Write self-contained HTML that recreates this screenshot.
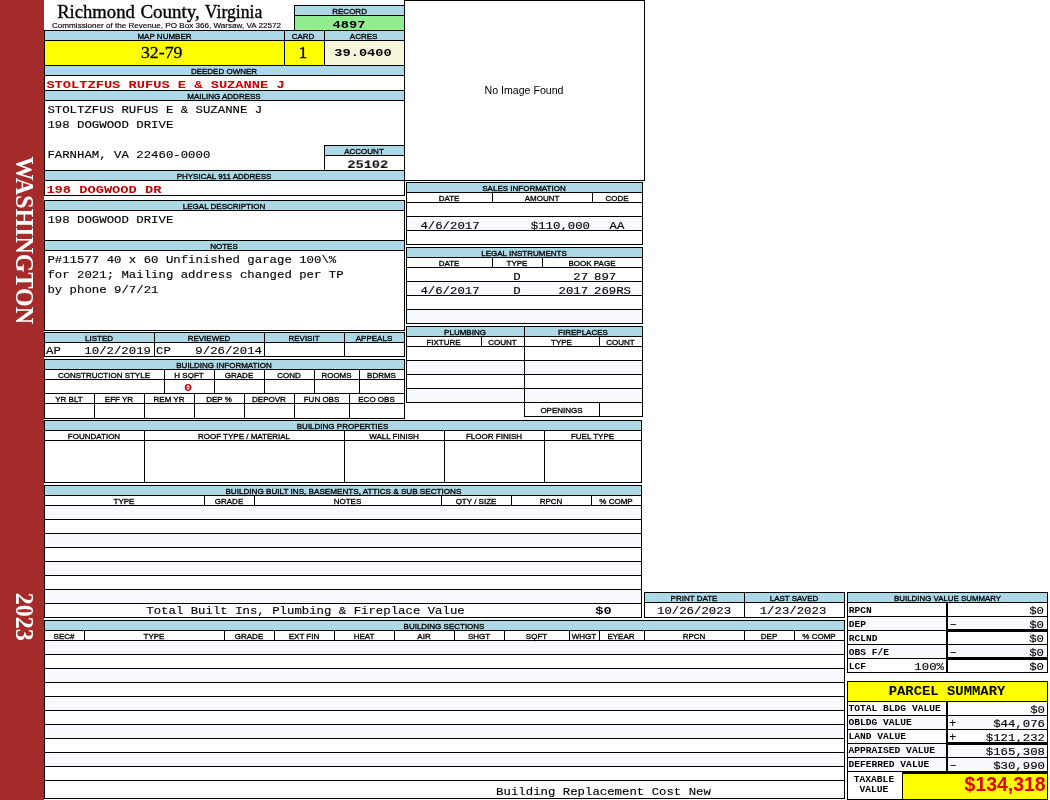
<!DOCTYPE html>
<html lang="en"><head><meta charset="utf-8"><title>Richmond County, Virginia - Property Record Card</title>
<style>
html,body{margin:0;padding:0;background:#fff}
body{width:1050px;height:800px;overflow:hidden}
svg{display:block;will-change:transform}
rect{shape-rendering:crispEdges}
text{font-family:"Liberation Sans",sans-serif;fill:#000}
.lab{font-size:8px;stroke:#000;stroke-width:.32px}
.sub{font-size:8.1px;stroke:#000;stroke-width:.15px}
.title{font-family:"Liberation Serif",serif;font-size:18.67px;stroke:#000;stroke-width:.35px}
.big{font-family:"Liberation Serif",serif;font-size:17.8px;stroke:#000;stroke-width:.3px}
.side{font-family:"Liberation Serif",serif;font-size:24px;font-weight:bold;fill:#fff}
.mono{font-family:"Liberation Mono",monospace;font-size:12.35px;stroke:#000;stroke-width:.15px}
.msign{font-family:"Liberation Mono",monospace;font-size:12.35px}
.mb{font-family:"Liberation Mono",monospace;font-size:13.7px;font-weight:bold}
.mb2{font-family:"Liberation Mono",monospace;font-size:13.7px;font-weight:bold}
.redb{font-family:"Liberation Mono",monospace;font-size:13.7px;font-weight:bold;fill:#c80000}
.redb2{font-family:"Liberation Mono",monospace;font-size:13.7px;font-weight:bold;fill:#c80000}
.slab{font-family:"Liberation Mono",monospace;font-size:9.6px;font-weight:bold}
.ptitle{font-family:"Liberation Mono",monospace;font-size:13.9px;font-weight:bold}
.noimg{font-size:11px}
.tax{font-size:19.4px;font-weight:bold;fill:#e00000}
</style></head>
<body>
<svg width="1050" height="800" viewBox="0 0 1050 800">
<rect x="0" y="0" width="44" height="800" fill="#a52a2a"/>
<text class="side" transform="translate(15.5,240.3) rotate(90) scale(1,1.06)" text-anchor="middle">WASHINGTON</text>
<text class="side" transform="translate(15.5,616.8) rotate(90) scale(1,1.06)" text-anchor="middle">2023</text>
<text x="57.2" y="18.1" class="title" text-anchor="start" textLength="77.6" lengthAdjust="spacingAndGlyphs">Richmond</text>
<text x="140.4" y="18.1" class="title" text-anchor="start" textLength="59.5" lengthAdjust="spacingAndGlyphs">County,</text>
<text x="204.8" y="18.1" class="title" text-anchor="start" textLength="57.6" lengthAdjust="spacingAndGlyphs">Virginia</text>
<text x="166.5" y="27.7" class="sub" text-anchor="middle">Commissioner of the Revenue, PO Box 366, Warsaw, VA 22572</text>
<rect x="294" y="5" width="111" height="1" fill="#000"/>
<rect x="294" y="30" width="111" height="1" fill="#000"/>
<rect x="294" y="5" width="1" height="26" fill="#000"/>
<rect x="404" y="5" width="1" height="26" fill="#000"/>
<rect x="295" y="6" width="109" height="9" fill="#add8e6"/>
<rect x="294" y="15" width="111" height="1" fill="#000"/>
<rect x="295" y="16" width="109" height="14" fill="#90ee90"/>
<text x="349.6" y="13.5" class="lab" text-anchor="middle">RECORD</text>
<text transform="translate(349 27.8) scale(1 0.85)" class="mb" text-anchor="middle">4897</text>
<rect x="45" y="31" width="359" height="9" fill="#add8e6"/>
<rect x="45" y="41" width="279" height="24" fill="#ffff00"/>
<rect x="325" y="41" width="79" height="24" fill="#f5f5dc"/>
<rect x="44" y="30" width="361" height="1" fill="#000"/>
<rect x="44" y="40" width="361" height="1" fill="#000"/>
<rect x="44" y="65" width="361" height="1" fill="#000"/>
<rect x="284" y="30" width="1" height="36" fill="#000"/>
<rect x="324" y="30" width="1" height="36" fill="#000"/>
<text x="164.5" y="38.5" class="lab" text-anchor="middle">MAP NUMBER</text>
<text x="303" y="38.5" class="lab" text-anchor="middle">CARD</text>
<text x="363.6" y="38.5" class="lab" text-anchor="middle">ACRES</text>
<text transform="translate(161.7 58) scale(1 0.9)" class="big" text-anchor="middle">32-79</text>
<text transform="translate(303 57.7) scale(1 0.9)" class="big" text-anchor="middle">1</text>
<text transform="translate(363 55.8) scale(1 0.85)" class="mb" text-anchor="middle">39.0400</text>
<rect x="45" y="66" width="359" height="9" fill="#add8e6"/>
<rect x="44" y="75" width="361" height="1" fill="#000"/>
<rect x="44" y="90" width="361" height="1" fill="#000"/>
<text x="224" y="73.5" class="lab" text-anchor="middle">DEEDED OWNER</text>
<text transform="translate(46.4 87.8) scale(1 0.85)" class="redb" text-anchor="start">STOLTZFUS RUFUS E &amp; SUZANNE J</text>
<rect x="45" y="91" width="359" height="9" fill="#add8e6"/>
<rect x="44" y="100" width="361" height="1" fill="#000"/>
<rect x="44" y="170" width="361" height="1" fill="#000"/>
<text x="224" y="98.5" class="lab" text-anchor="middle">MAILING ADDRESS</text>
<text transform="translate(47.4 112.8) scale(1 0.85)" class="mono" text-anchor="start">STOLTZFUS RUFUS E &amp; SUZANNE J</text>
<text transform="translate(47.4 127.77) scale(1 0.85)" class="mono" text-anchor="start">198 DOGWOOD DRIVE</text>
<text transform="translate(47.4 157.71) scale(1 0.85)" class="mono" text-anchor="start">FARNHAM, VA 22460-0000</text>
<rect x="324" y="145" width="81" height="1" fill="#000"/>
<rect x="324" y="170" width="81" height="1" fill="#000"/>
<rect x="324" y="145" width="1" height="26" fill="#000"/>
<rect x="404" y="145" width="1" height="26" fill="#000"/>
<rect x="325" y="146" width="79" height="9" fill="#add8e6"/>
<rect x="324" y="155" width="81" height="1" fill="#000"/>
<text x="364" y="153.5" class="lab" text-anchor="middle">ACCOUNT</text>
<text transform="translate(367.7 168) scale(1 0.85)" class="mb" text-anchor="middle">25102</text>
<rect x="45" y="171" width="359" height="9" fill="#add8e6"/>
<rect x="44" y="180" width="361" height="1" fill="#000"/>
<rect x="44" y="195" width="361" height="1" fill="#000"/>
<text x="224" y="178.5" class="lab" text-anchor="middle">PHYSICAL 911 ADDRESS</text>
<text transform="translate(46.4 192.8) scale(1 0.85)" class="redb" text-anchor="start">198 DOGWOOD DR</text>
<rect x="44" y="30" width="1" height="166" fill="#000"/>
<rect x="404" y="30" width="1" height="166" fill="#000"/>
<rect x="44" y="200" width="361" height="1" fill="#000"/>
<rect x="44" y="330" width="361" height="1" fill="#000"/>
<rect x="44" y="200" width="1" height="131" fill="#000"/>
<rect x="404" y="200" width="1" height="131" fill="#000"/>
<rect x="45" y="201" width="359" height="9" fill="#add8e6"/>
<rect x="44" y="210" width="361" height="1" fill="#000"/>
<rect x="44" y="240" width="361" height="1" fill="#000"/>
<rect x="45" y="241" width="359" height="9" fill="#add8e6"/>
<rect x="44" y="250" width="361" height="1" fill="#000"/>
<text x="224" y="208.5" class="lab" text-anchor="middle">LEGAL DESCRIPTION</text>
<text x="224" y="248.5" class="lab" text-anchor="middle">NOTES</text>
<text transform="translate(47.4 223) scale(1 0.85)" class="mono" text-anchor="start">198 DOGWOOD DRIVE</text>
<text transform="translate(47.4 263) scale(1 0.85)" class="mono" text-anchor="start">P#11577 40 x 60 Unfinished garage 100\%</text>
<text transform="translate(47.4 278) scale(1 0.85)" class="mono" text-anchor="start">for 2021; Mailing address changed per TP</text>
<text transform="translate(47.4 293) scale(1 0.85)" class="mono" text-anchor="start">by phone 9/7/21</text>
<rect x="44" y="332" width="361" height="1" fill="#000"/>
<rect x="44" y="356" width="361" height="1" fill="#000"/>
<rect x="44" y="332" width="1" height="25" fill="#000"/>
<rect x="404" y="332" width="1" height="25" fill="#000"/>
<rect x="45" y="333" width="359" height="9" fill="#add8e6"/>
<rect x="44" y="342" width="361" height="1" fill="#000"/>
<rect x="154" y="332" width="1" height="25" fill="#000"/>
<rect x="264" y="332" width="1" height="25" fill="#000"/>
<rect x="344" y="332" width="1" height="25" fill="#000"/>
<text x="99" y="340.5" class="lab" text-anchor="middle">LISTED</text>
<text x="209" y="340.5" class="lab" text-anchor="middle">REVIEWED</text>
<text x="304" y="340.5" class="lab" text-anchor="middle">REVISIT</text>
<text x="374" y="340.5" class="lab" text-anchor="middle">APPEALS</text>
<text transform="translate(46 354) scale(1 0.85)" class="mono" text-anchor="start">AP</text>
<text transform="translate(151 354) scale(1 0.85)" class="mono" text-anchor="end">10/2/2019</text>
<text transform="translate(156 354) scale(1 0.85)" class="mono" text-anchor="start">CP</text>
<text transform="translate(262 354) scale(1 0.85)" class="mono" text-anchor="end">9/26/2014</text>
<rect x="44" y="359" width="361" height="1" fill="#000"/>
<rect x="44" y="418" width="361" height="1" fill="#000"/>
<rect x="44" y="359" width="1" height="60" fill="#000"/>
<rect x="404" y="359" width="1" height="60" fill="#000"/>
<rect x="45" y="360" width="359" height="9" fill="#add8e6"/>
<rect x="44" y="369" width="361" height="1" fill="#000"/>
<rect x="44" y="379" width="361" height="1" fill="#000"/>
<rect x="44" y="393" width="361" height="1" fill="#000"/>
<rect x="44" y="403" width="361" height="1" fill="#000"/>
<rect x="164" y="369" width="1" height="25" fill="#000"/>
<rect x="214" y="369" width="1" height="25" fill="#000"/>
<rect x="264" y="369" width="1" height="25" fill="#000"/>
<rect x="314" y="369" width="1" height="25" fill="#000"/>
<rect x="359" y="369" width="1" height="25" fill="#000"/>
<rect x="94" y="393" width="1" height="26" fill="#000"/>
<rect x="144" y="393" width="1" height="26" fill="#000"/>
<rect x="194" y="393" width="1" height="26" fill="#000"/>
<rect x="244" y="393" width="1" height="26" fill="#000"/>
<rect x="294" y="393" width="1" height="26" fill="#000"/>
<rect x="349" y="393" width="1" height="26" fill="#000"/>
<text x="224" y="367.5" class="lab" text-anchor="middle">BUILDING INFORMATION</text>
<text x="104" y="377.5" class="lab" text-anchor="middle">CONSTRUCTION STYLE</text>
<text x="189" y="377.5" class="lab" text-anchor="middle">H SQFT</text>
<text x="239" y="377.5" class="lab" text-anchor="middle">GRADE</text>
<text x="289" y="377.5" class="lab" text-anchor="middle">COND</text>
<text x="336.5" y="377.5" class="lab" text-anchor="middle">ROOMS</text>
<text x="381.5" y="377.5" class="lab" text-anchor="middle">BDRMS</text>
<text x="69" y="401.5" class="lab" text-anchor="middle">YR BLT</text>
<text x="119" y="401.5" class="lab" text-anchor="middle">EFF YR</text>
<text x="169" y="401.5" class="lab" text-anchor="middle">REM YR</text>
<text x="219" y="401.5" class="lab" text-anchor="middle">DEP %</text>
<text x="269" y="401.5" class="lab" text-anchor="middle">DEPOVR</text>
<text x="321.5" y="401.5" class="lab" text-anchor="middle">FUN OBS</text>
<text x="376.5" y="401.5" class="lab" text-anchor="middle">ECO OBS</text>
<text transform="translate(188 390.5) scale(1 0.85)" class="redb2" text-anchor="middle">0</text>
<rect x="404" y="0" width="241" height="181" fill="#fff"/>
<rect x="404" y="0" width="241" height="1" fill="#000"/>
<rect x="404" y="180" width="241" height="1" fill="#000"/>
<rect x="404" y="0" width="1" height="181" fill="#000"/>
<rect x="644" y="0" width="1" height="181" fill="#000"/>
<text x="524" y="94" class="noimg" text-anchor="middle" textLength="79" lengthAdjust="spacingAndGlyphs">No Image Found</text>
<rect x="406" y="182" width="237" height="1" fill="#000"/>
<rect x="406" y="244" width="237" height="1" fill="#000"/>
<rect x="406" y="182" width="1" height="63" fill="#000"/>
<rect x="642" y="182" width="1" height="63" fill="#000"/>
<rect x="407" y="183" width="235" height="9" fill="#add8e6"/>
<rect x="407" y="217" width="235" height="13" fill="#f8f8ff"/>
<rect x="406" y="192" width="237" height="1" fill="#000"/>
<rect x="406" y="202" width="237" height="1" fill="#000"/>
<rect x="406" y="216" width="237" height="1" fill="#000"/>
<rect x="406" y="230" width="237" height="1" fill="#000"/>
<rect x="492" y="192" width="1" height="11" fill="#000"/>
<rect x="592" y="192" width="1" height="11" fill="#000"/>
<text x="524" y="190.5" class="lab" text-anchor="middle">SALES INFORMATION</text>
<text x="449" y="200.5" class="lab" text-anchor="middle">DATE</text>
<text x="542" y="200.5" class="lab" text-anchor="middle">AMOUNT</text>
<text x="617" y="200.5" class="lab" text-anchor="middle">CODE</text>
<text transform="translate(450 228.5) scale(1 0.85)" class="mono" text-anchor="middle">4/6/2017</text>
<text transform="translate(590 228.5) scale(1 0.85)" class="mono" text-anchor="end">$110,000</text>
<text transform="translate(617 228.5) scale(1 0.85)" class="mono" text-anchor="middle">AA</text>
<rect x="406" y="247" width="237" height="1" fill="#000"/>
<rect x="406" y="323" width="237" height="1" fill="#000"/>
<rect x="406" y="247" width="1" height="77" fill="#000"/>
<rect x="642" y="247" width="1" height="77" fill="#000"/>
<rect x="407" y="248" width="235" height="9" fill="#add8e6"/>
<rect x="407" y="282" width="235" height="13" fill="#f8f8ff"/>
<rect x="407" y="310" width="235" height="13" fill="#f8f8ff"/>
<rect x="406" y="257" width="237" height="1" fill="#000"/>
<rect x="406" y="267" width="237" height="1" fill="#000"/>
<rect x="406" y="281" width="237" height="1" fill="#000"/>
<rect x="406" y="295" width="237" height="1" fill="#000"/>
<rect x="406" y="309" width="237" height="1" fill="#000"/>
<rect x="492" y="257" width="1" height="11" fill="#000"/>
<rect x="542" y="257" width="1" height="11" fill="#000"/>
<text x="524" y="255.5" class="lab" text-anchor="middle">LEGAL INSTRUMENTS</text>
<text x="449" y="265.5" class="lab" text-anchor="middle">DATE</text>
<text x="517" y="265.5" class="lab" text-anchor="middle">TYPE</text>
<text x="592" y="265.5" class="lab" text-anchor="middle">BOOK PAGE</text>
<text transform="translate(517 279.5) scale(1 0.85)" class="mono" text-anchor="middle">D</text>
<text transform="translate(573.3 279.5) scale(1 0.85)" class="mono" text-anchor="start">27</text>
<text transform="translate(594 279.5) scale(1 0.85)" class="mono" text-anchor="start">897</text>
<text transform="translate(450 293.5) scale(1 0.85)" class="mono" text-anchor="middle">4/6/2017</text>
<text transform="translate(517 293.5) scale(1 0.85)" class="mono" text-anchor="middle">D</text>
<text transform="translate(558.5 293.5) scale(1 0.85)" class="mono" text-anchor="start">2017</text>
<text transform="translate(594 293.5) scale(1 0.85)" class="mono" text-anchor="start">269RS</text>
<rect x="406" y="326" width="119" height="1" fill="#000"/>
<rect x="406" y="402" width="119" height="1" fill="#000"/>
<rect x="406" y="326" width="1" height="77" fill="#000"/>
<rect x="524" y="326" width="1" height="77" fill="#000"/>
<rect x="524" y="326" width="119" height="1" fill="#000"/>
<rect x="524" y="416" width="119" height="1" fill="#000"/>
<rect x="524" y="326" width="1" height="91" fill="#000"/>
<rect x="642" y="326" width="1" height="91" fill="#000"/>
<rect x="407" y="327" width="117" height="9" fill="#add8e6"/>
<rect x="525" y="327" width="117" height="9" fill="#add8e6"/>
<rect x="407" y="361" width="235" height="13" fill="#f8f8ff"/>
<rect x="407" y="389" width="235" height="13" fill="#f8f8ff"/>
<rect x="524" y="326" width="1" height="91" fill="#000"/>
<rect x="406" y="336" width="237" height="1" fill="#000"/>
<rect x="406" y="346" width="237" height="1" fill="#000"/>
<rect x="406" y="360" width="237" height="1" fill="#000"/>
<rect x="406" y="374" width="237" height="1" fill="#000"/>
<rect x="406" y="388" width="237" height="1" fill="#000"/>
<rect x="406" y="402" width="237" height="1" fill="#000"/>
<rect x="481" y="336" width="1" height="11" fill="#000"/>
<rect x="599" y="336" width="1" height="11" fill="#000"/>
<rect x="599" y="402" width="1" height="15" fill="#000"/>
<text x="465" y="334.5" class="lab" text-anchor="middle">PLUMBING</text>
<text x="583" y="334.5" class="lab" text-anchor="middle">FIREPLACES</text>
<text x="443.5" y="344.5" class="lab" text-anchor="middle">FIXTURE</text>
<text x="502.5" y="344.5" class="lab" text-anchor="middle">COUNT</text>
<text x="561.5" y="344.5" class="lab" text-anchor="middle">TYPE</text>
<text x="620.5" y="344.5" class="lab" text-anchor="middle">COUNT</text>
<text x="561.5" y="412.5" class="lab" text-anchor="middle">OPENINGS</text>
<rect x="44" y="420" width="598" height="1" fill="#000"/>
<rect x="44" y="482" width="598" height="1" fill="#000"/>
<rect x="44" y="420" width="1" height="63" fill="#000"/>
<rect x="641" y="420" width="1" height="63" fill="#000"/>
<rect x="45" y="421" width="596" height="9" fill="#add8e6"/>
<rect x="44" y="430" width="598" height="1" fill="#000"/>
<rect x="44" y="440" width="598" height="1" fill="#000"/>
<rect x="144" y="430" width="1" height="53" fill="#000"/>
<rect x="344" y="430" width="1" height="53" fill="#000"/>
<rect x="444" y="430" width="1" height="53" fill="#000"/>
<rect x="544" y="430" width="1" height="53" fill="#000"/>
<text x="342.5" y="428.5" class="lab" text-anchor="middle">BUILDING PROPERTIES</text>
<text x="94" y="438.5" class="lab" text-anchor="middle">FOUNDATION</text>
<text x="244" y="438.5" class="lab" text-anchor="middle">ROOF TYPE / MATERIAL</text>
<text x="394" y="438.5" class="lab" text-anchor="middle">WALL FINISH</text>
<text x="494" y="438.5" class="lab" text-anchor="middle">FLOOR FINISH</text>
<text x="592.5" y="438.5" class="lab" text-anchor="middle">FUEL TYPE</text>
<rect x="44" y="485" width="598" height="1" fill="#000"/>
<rect x="44" y="617" width="598" height="1" fill="#000"/>
<rect x="44" y="485" width="1" height="133" fill="#000"/>
<rect x="641" y="485" width="1" height="133" fill="#000"/>
<rect x="45" y="486" width="596" height="9" fill="#add8e6"/>
<rect x="44" y="495" width="598" height="1" fill="#000"/>
<rect x="44" y="505" width="598" height="1" fill="#000"/>
<rect x="45" y="506" width="596" height="13" fill="#f8f8ff"/>
<rect x="44" y="519" width="598" height="1" fill="#000"/>
<rect x="44" y="533" width="598" height="1" fill="#000"/>
<rect x="45" y="534" width="596" height="13" fill="#f8f8ff"/>
<rect x="44" y="547" width="598" height="1" fill="#000"/>
<rect x="44" y="561" width="598" height="1" fill="#000"/>
<rect x="45" y="562" width="596" height="13" fill="#f8f8ff"/>
<rect x="44" y="575" width="598" height="1" fill="#000"/>
<rect x="44" y="589" width="598" height="1" fill="#000"/>
<rect x="45" y="590" width="596" height="13" fill="#f8f8ff"/>
<rect x="44" y="603" width="598" height="1" fill="#000"/>
<rect x="44" y="617" width="598" height="1" fill="#000"/>
<rect x="204" y="495" width="1" height="11" fill="#000"/>
<rect x="254" y="495" width="1" height="11" fill="#000"/>
<rect x="441" y="495" width="1" height="11" fill="#000"/>
<rect x="511" y="495" width="1" height="11" fill="#000"/>
<rect x="591" y="495" width="1" height="11" fill="#000"/>
<text x="343.4" y="493.5" class="lab" text-anchor="middle" textLength="236" lengthAdjust="spacingAndGlyphs">BUILDING BUILT INS, BASEMENTS, ATTICS &amp; SUB SECTIONS</text>
<text x="124" y="503.5" class="lab" text-anchor="middle">TYPE</text>
<text x="229" y="503.5" class="lab" text-anchor="middle">GRADE</text>
<text x="347.5" y="503.5" class="lab" text-anchor="middle">NOTES</text>
<text x="476" y="503.5" class="lab" text-anchor="middle">QTY / SIZE</text>
<text x="551" y="503.5" class="lab" text-anchor="middle">RPCN</text>
<text x="616" y="503.5" class="lab" text-anchor="middle">% COMP</text>
<text transform="translate(305.5 614.3) scale(1 0.85)" class="mono" text-anchor="middle">Total Built Ins, Plumbing &amp; Fireplace Value</text>
<text transform="translate(603.5 614.2) scale(1 0.85)" class="mb2" text-anchor="middle">$0</text>
<rect x="644" y="592" width="201" height="1" fill="#000"/>
<rect x="644" y="617" width="201" height="1" fill="#000"/>
<rect x="644" y="592" width="1" height="26" fill="#000"/>
<rect x="844" y="592" width="1" height="26" fill="#000"/>
<rect x="645" y="593" width="199" height="9" fill="#add8e6"/>
<rect x="644" y="602" width="201" height="1" fill="#000"/>
<rect x="744" y="592" width="1" height="26" fill="#000"/>
<text x="694" y="600.5" class="lab" text-anchor="middle">PRINT DATE</text>
<text x="794" y="600.5" class="lab" text-anchor="middle">LAST SAVED</text>
<text transform="translate(694 613.8) scale(1 0.85)" class="mono" text-anchor="middle">10/26/2023</text>
<text transform="translate(793 613.8) scale(1 0.85)" class="mono" text-anchor="middle">1/23/2023</text>
<rect x="44" y="620" width="801" height="1" fill="#000"/>
<rect x="44" y="798" width="801" height="1" fill="#000"/>
<rect x="44" y="620" width="1" height="179" fill="#000"/>
<rect x="844" y="620" width="1" height="179" fill="#000"/>
<rect x="45" y="621" width="799" height="9" fill="#add8e6"/>
<rect x="44" y="630" width="801" height="1" fill="#000"/>
<rect x="44" y="640" width="801" height="1" fill="#000"/>
<rect x="45" y="641" width="799" height="13" fill="#f8f8ff"/>
<rect x="44" y="654" width="801" height="1" fill="#000"/>
<rect x="44" y="668" width="801" height="1" fill="#000"/>
<rect x="45" y="669" width="799" height="13" fill="#f8f8ff"/>
<rect x="44" y="682" width="801" height="1" fill="#000"/>
<rect x="44" y="696" width="801" height="1" fill="#000"/>
<rect x="45" y="697" width="799" height="13" fill="#f8f8ff"/>
<rect x="44" y="710" width="801" height="1" fill="#000"/>
<rect x="44" y="724" width="801" height="1" fill="#000"/>
<rect x="45" y="725" width="799" height="13" fill="#f8f8ff"/>
<rect x="44" y="738" width="801" height="1" fill="#000"/>
<rect x="44" y="752" width="801" height="1" fill="#000"/>
<rect x="45" y="753" width="799" height="13" fill="#f8f8ff"/>
<rect x="44" y="766" width="801" height="1" fill="#000"/>
<rect x="44" y="780" width="801" height="1" fill="#000"/>
<rect x="84" y="630" width="1" height="11" fill="#000"/>
<rect x="224" y="630" width="1" height="11" fill="#000"/>
<rect x="274" y="630" width="1" height="11" fill="#000"/>
<rect x="334" y="630" width="1" height="11" fill="#000"/>
<rect x="394" y="630" width="1" height="11" fill="#000"/>
<rect x="454" y="630" width="1" height="11" fill="#000"/>
<rect x="504" y="630" width="1" height="11" fill="#000"/>
<rect x="569" y="630" width="1" height="11" fill="#000"/>
<rect x="599" y="630" width="1" height="11" fill="#000"/>
<rect x="644" y="630" width="1" height="11" fill="#000"/>
<rect x="744" y="630" width="1" height="11" fill="#000"/>
<rect x="794" y="630" width="1" height="11" fill="#000"/>
<text x="444" y="628.5" class="lab" text-anchor="middle">BUILDING SECTIONS</text>
<text x="64" y="638.5" class="lab" text-anchor="middle">SEC#</text>
<text x="154" y="638.5" class="lab" text-anchor="middle">TYPE</text>
<text x="249" y="638.5" class="lab" text-anchor="middle">GRADE</text>
<text x="304" y="638.5" class="lab" text-anchor="middle">EXT FIN</text>
<text x="364" y="638.5" class="lab" text-anchor="middle">HEAT</text>
<text x="424" y="638.5" class="lab" text-anchor="middle">AIR</text>
<text x="479" y="638.5" class="lab" text-anchor="middle">SHGT</text>
<text x="536.5" y="638.5" class="lab" text-anchor="middle">SQFT</text>
<text x="584" y="638.5" class="lab" text-anchor="middle">WHGT</text>
<text x="621" y="638.5" class="lab" text-anchor="middle">EYEAR</text>
<text x="694" y="638.5" class="lab" text-anchor="middle">RPCN</text>
<text x="769" y="638.5" class="lab" text-anchor="middle">DEP</text>
<text x="819" y="638.5" class="lab" text-anchor="middle">% COMP</text>
<text transform="translate(603.5 795) scale(1 0.85)" class="mono" text-anchor="middle">Building Replacement Cost New</text>
<rect x="847" y="592" width="201" height="1" fill="#000"/>
<rect x="847" y="672" width="201" height="1" fill="#000"/>
<rect x="847" y="592" width="1" height="81" fill="#000"/>
<rect x="1047" y="592" width="1" height="81" fill="#000"/>
<rect x="848" y="593" width="199" height="9" fill="#add8e6"/>
<rect x="847" y="602" width="201" height="1" fill="#000"/>
<rect x="848" y="617" width="199" height="13" fill="#f8f8ff"/>
<rect x="848" y="645" width="199" height="13" fill="#f8f8ff"/>
<rect x="847" y="616" width="201" height="1" fill="#000"/>
<rect x="847" y="630" width="201" height="1" fill="#000"/>
<rect x="847" y="644" width="201" height="1" fill="#000"/>
<rect x="847" y="658" width="201" height="1" fill="#000"/>
<rect x="946" y="602" width="2" height="71" fill="#000"/>
<rect x="946" y="629" width="102" height="3" fill="#000"/>
<rect x="946" y="657" width="102" height="3" fill="#000"/>
<text x="947.6" y="600.5" class="lab" text-anchor="middle" textLength="107" lengthAdjust="spacingAndGlyphs">BUILDING VALUE SUMMARY</text>
<text transform="translate(848.8 612.8) scale(1 0.87)" class="slab" text-anchor="start">RPCN</text>
<text transform="translate(1044 614) scale(1 0.85)" class="mono" text-anchor="end">$0</text>
<text transform="translate(848.8 626.8) scale(1 0.87)" class="slab" text-anchor="start">DEP</text>
<text transform="translate(1044 628) scale(1 0.85)" class="mono" text-anchor="end">$0</text>
<text transform="translate(848.8 640.8) scale(1 0.87)" class="slab" text-anchor="start">RCLND</text>
<text transform="translate(1044 642) scale(1 0.85)" class="mono" text-anchor="end">$0</text>
<text transform="translate(848.8 654.8) scale(1 0.87)" class="slab" text-anchor="start">OBS F/E</text>
<text transform="translate(1044 656) scale(1 0.85)" class="mono" text-anchor="end">$0</text>
<text transform="translate(848.8 668.8) scale(1 0.87)" class="slab" text-anchor="start">LCF</text>
<text transform="translate(1044 670) scale(1 0.85)" class="mono" text-anchor="end">$0</text>
<text x="949.4" y="628" class="msign" text-anchor="start">–</text>
<text x="949.4" y="656" class="msign" text-anchor="start">–</text>
<text transform="translate(944 670) scale(1 0.85)" class="mono" text-anchor="end">100%</text>
<rect x="847" y="681" width="201" height="1" fill="#000"/>
<rect x="847" y="799" width="201" height="1" fill="#000"/>
<rect x="847" y="681" width="1" height="119" fill="#000"/>
<rect x="1047" y="681" width="1" height="119" fill="#000"/>
<rect x="848" y="682" width="199" height="19" fill="#ffff00"/>
<rect x="847" y="701" width="201" height="1" fill="#000"/>
<rect x="848" y="716" width="199" height="13" fill="#f8f8ff"/>
<rect x="848" y="744" width="199" height="13" fill="#f8f8ff"/>
<rect x="848" y="758" width="199" height="13" fill="#f8f8ff"/>
<rect x="847" y="715" width="201" height="1" fill="#000"/>
<rect x="847" y="729" width="201" height="1" fill="#000"/>
<rect x="847" y="743" width="201" height="1" fill="#000"/>
<rect x="847" y="757" width="201" height="1" fill="#000"/>
<rect x="847" y="771" width="201" height="1" fill="#000"/>
<rect x="946" y="701" width="2" height="71" fill="#000"/>
<rect x="946" y="742" width="102" height="3" fill="#000"/>
<rect x="903" y="774" width="144" height="25" fill="#ffff00"/>
<rect x="902" y="771" width="146" height="3" fill="#000"/>
<rect x="902" y="771" width="1" height="29" fill="#000"/>
<text transform="translate(947 694.8) scale(1 0.93)" class="ptitle" text-anchor="middle">PARCEL SUMMARY</text>
<text transform="translate(848.6 711) scale(1 0.87)" class="slab" text-anchor="start">TOTAL BLDG VALUE</text>
<text transform="translate(1045 713) scale(1 0.85)" class="mono" text-anchor="end">$0</text>
<text transform="translate(848.6 725) scale(1 0.87)" class="slab" text-anchor="start">OBLDG VALUE</text>
<text transform="translate(1045 727) scale(1 0.85)" class="mono" text-anchor="end">$44,076</text>
<text x="949" y="727" class="msign" text-anchor="start">+</text>
<text transform="translate(848.6 739) scale(1 0.87)" class="slab" text-anchor="start">LAND VALUE</text>
<text transform="translate(1045 741) scale(1 0.85)" class="mono" text-anchor="end">$121,232</text>
<text x="949" y="741" class="msign" text-anchor="start">+</text>
<text transform="translate(848.6 753) scale(1 0.87)" class="slab" text-anchor="start">APPRAISED VALUE</text>
<text transform="translate(1045 755) scale(1 0.85)" class="mono" text-anchor="end">$165,308</text>
<text transform="translate(848.6 767) scale(1 0.87)" class="slab" text-anchor="start">DEFERRED VALUE</text>
<text transform="translate(1045 769) scale(1 0.85)" class="mono" text-anchor="end">$30,990</text>
<text x="949.4" y="769" class="msign" text-anchor="start">–</text>
<text transform="translate(874 781.9) scale(1 0.87)" class="slab" text-anchor="middle">TAXABLE</text>
<text transform="translate(874 791.9) scale(1 0.87)" class="slab" text-anchor="middle">VALUE</text>
<text x="1045.5" y="790.8" class="tax" text-anchor="end">$134,318</text>
</svg>
</body></html>
